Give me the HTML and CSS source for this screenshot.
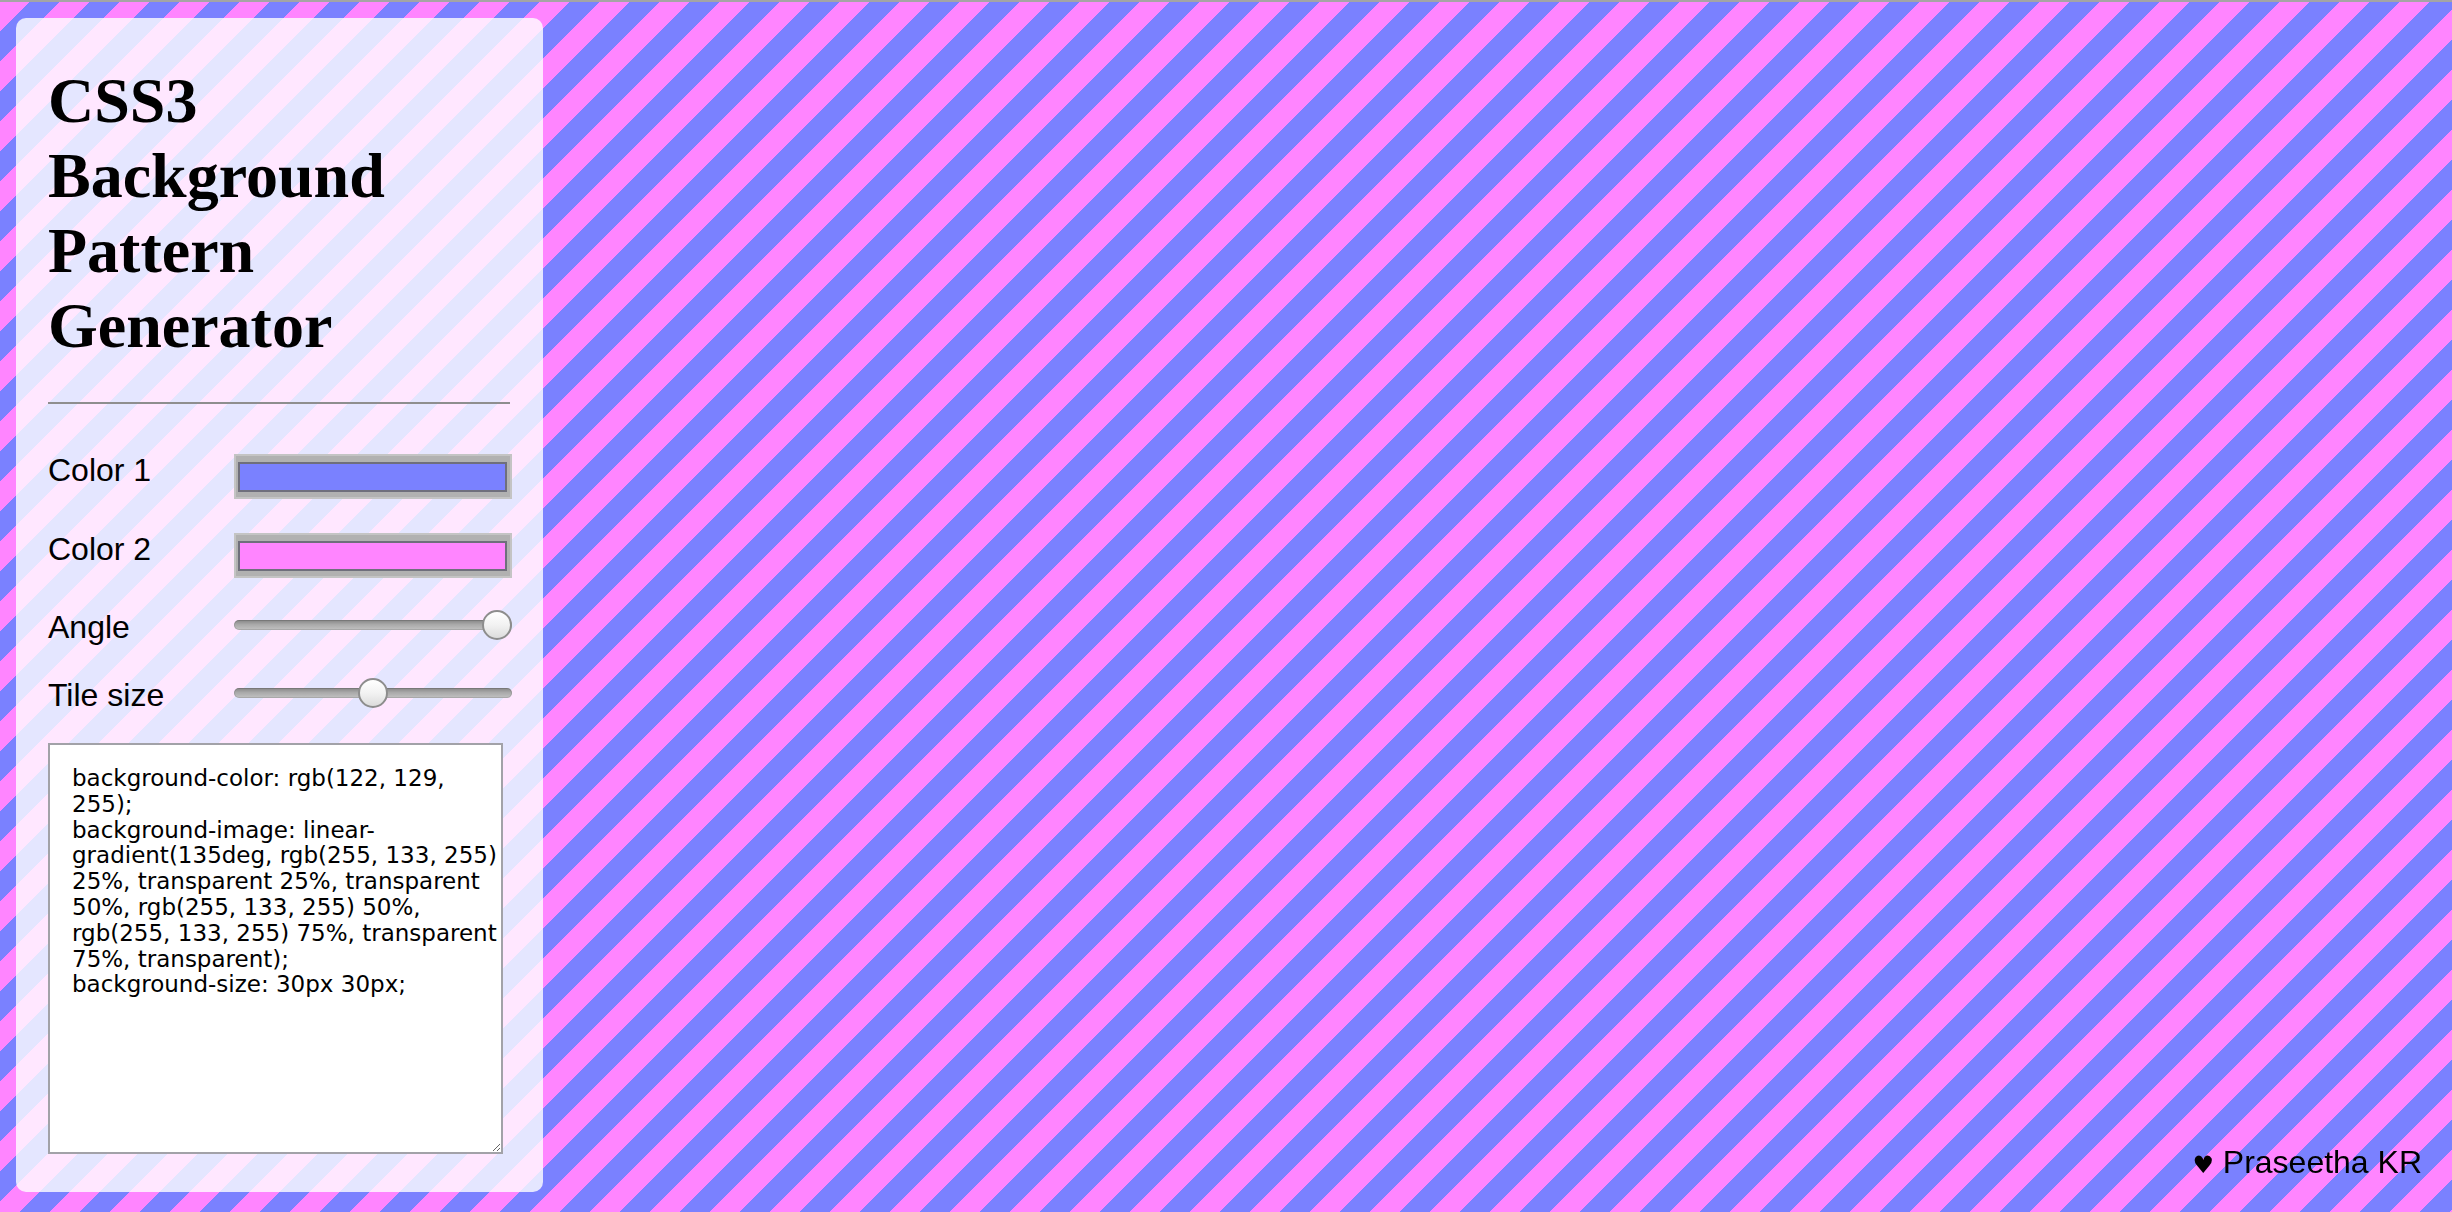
FILE: index.html
```html
<!DOCTYPE html>
<html lang="en">
<head>
<meta charset="utf-8">
<title>CSS3 Background Pattern Generator</title>
<link rel="stylesheet" href="styles.css">
</head>
<body>
<div class="panel">
  <h1 class="title">CSS3 Background Pattern Generator</h1>
  <hr class="rule">
  <div class="row row-color row-first">
    <label class="label" for="c1">Color 1</label>
    <input class="swatch" id="c1" type="color" value="#7a81ff">
  </div>
  <div class="row row-color row-second">
    <label class="label" for="c2">Color 2</label>
    <input class="swatch" id="c2" type="color" value="#ff85ff">
  </div>
  <div class="row row-range row-third">
    <label class="label" for="angle">Angle</label>
    <input class="range" id="angle" type="range" min="0" max="135" value="135">
  </div>
  <div class="row row-range row-fourth">
    <label class="label" for="tile">Tile size</label>
    <input class="range" id="tile" type="range" min="10" max="50" value="30">
  </div>
  <textarea class="code" spellcheck="false">background-color: rgb(122, 129,
255);
background-image: linear-
gradient(135deg, rgb(255, 133, 255)
25%, transparent 25%, transparent
50%, rgb(255, 133, 255) 50%,
rgb(255, 133, 255) 75%, transparent
75%, transparent);
background-size: 30px 30px;</textarea>
</div>
<div class="credit"><span class="heart">♥</span> Praseetha KR</div>
</body>
</html>
```
FILE: styles.css
```css
html {
  border-top: 2px solid #a4a4a4;
  background-color: rgb(122, 129, 255);
  background-image: linear-gradient(135deg, rgb(255, 133, 255) 25%, transparent 25%, transparent 50%, rgb(255, 133, 255) 50%, rgb(255, 133, 255) 75%, transparent 75%, transparent);
  background-size: 60px 60px;
}

body {
  margin: 0;
  font-family: "Liberation Sans", Arial, sans-serif;
  color: #000;
}

.panel {
  box-sizing: border-box;
  width: 527px;
  margin: 16px 0 0 16px;
  padding: 45px 31px 38px 32px;
  background: rgba(255, 255, 255, 0.8);
  border-radius: 10px;
  display: flex;
  flex-direction: column;
}

.title {
  margin: 0;
  font-family: "Liberation Serif", "Times New Roman", serif;
  font-weight: bold;
  font-size: 64px;
  line-height: 75px;
  width: 360px;
}

.rule {
  margin: 39px 0 0;
  border: 0;
  border-top: 2px solid #8e8e8e;
  height: 0;
  width: 462px;
}

.row {
  display: flex;
  align-items: center;
}

.row-color { height: 45px; }
.row-range { height: 30px; }

.row-first { margin-top: 50px; }
.row-second { margin-top: 34px; }
.row-third { margin-top: 32px; }
.row-fourth { margin-top: 38px; }

.label {
  flex: 0 0 186px;
  font-size: 32px;
  line-height: 36.8px;
}

.row-color .label { margin-bottom: 12px; }
.row-range .label { margin-top: 4px; }

.swatch {
  -webkit-appearance: none;
  appearance: none;
  box-sizing: border-box;
  width: 278px;
  height: 45px;
  margin: 0;
  padding: 0;
  border: 0;
  background: #b1b1b1;
  box-shadow: inset 0 0 0 2px #c4c4c4;
  cursor: pointer;
}

.swatch::-webkit-color-swatch-wrapper {
  padding: 8px 5px 7px 4px;
}

.swatch::-webkit-color-swatch {
  border: 2px solid #6f6f7c;
  border-radius: 0;
}

.range {
  -webkit-appearance: none;
  appearance: none;
  width: 278px;
  height: 30px;
  margin: 0;
  padding: 0;
  background: transparent;
}

.range::-webkit-slider-runnable-track {
  height: 10px;
  border-radius: 5px;
  background: linear-gradient(#858585, #a9a9a9 45%, #c2c2c2);
  box-shadow: inset 0 0 0 1px rgba(0, 0, 0, 0.12);
}

.range::-webkit-slider-thumb {
  -webkit-appearance: none;
  appearance: none;
  box-sizing: border-box;
  width: 30px;
  height: 30px;
  margin-top: -10px;
  border-radius: 50%;
  border: 2px solid #8d8d8d;
  background: linear-gradient(#ffffff, #f2f2f2 50%, #dcdcdc);
}

.code {
  box-sizing: border-box;
  width: 455px;
  height: 411px;
  margin: 35px 0 0;
  padding: 21px 22px;
  border: 2px solid #a2a2a8;
  background: #fff;
  color: #000;
  font-family: "DejaVu Sans", "Lucida Grande", sans-serif;
  font-size: 23px;
  line-height: 25.8px;
  white-space: pre;
  overflow: hidden;
  resize: both;
}

.credit {
  position: fixed;
  right: 30px;
  bottom: 28px;
  font-size: 32px;
  line-height: 36.8px;
}

.heart {
  font-family: "DejaVu Sans", sans-serif;
  font-size: 24px;
}
```
